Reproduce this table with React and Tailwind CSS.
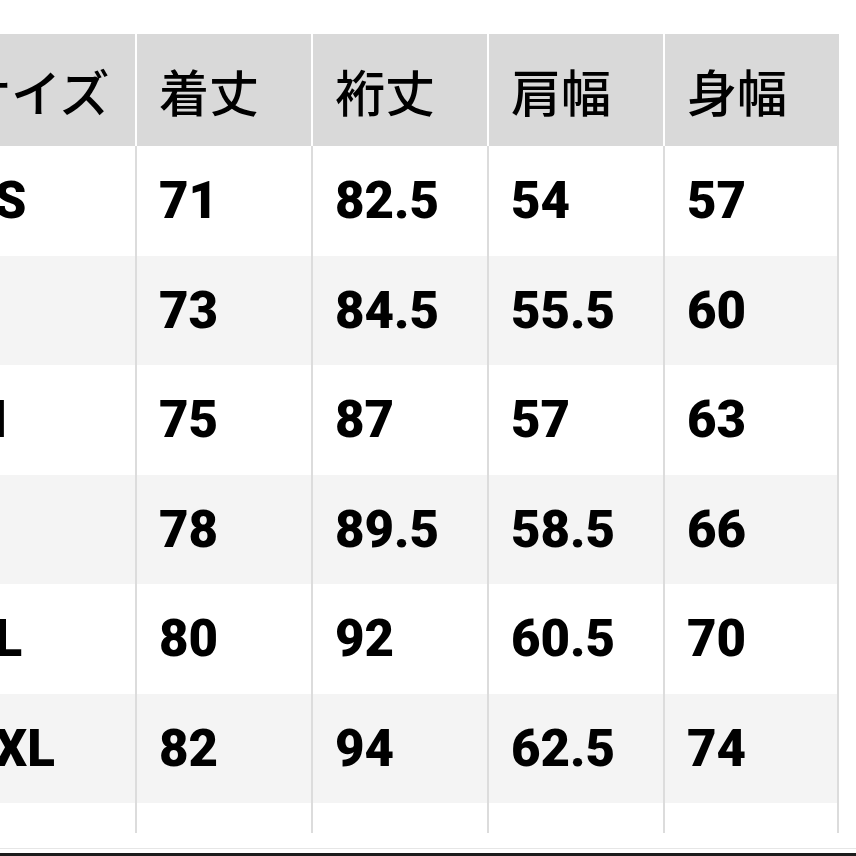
const headers = ['サイズ', '着丈', '裄丈', '肩幅', '身幅'];

const rows = [
	['XS', '71', '82.5', '54', '57'],
	['S', '73', '84.5', '55.5', '60'],
	['M', '75', '87', '57', '63'],
	['L', '78', '89.5', '58.5', '66'],
	['XL', '80', '92', '60.5', '70'],
	['XXL', '82', '94', '62.5', '74'],
];

const jp = { fontFamily: '"Noto Sans CJK JP", "Noto Sans", sans-serif' };
const num = { fontFamily: 'Roboto, "Liberation Sans", Arial, sans-serif' };

export default function App() {
	return (
		<div className="w-[856px] h-[856px] bg-white overflow-hidden relative">
			<div className="pt-[34px] ml-[-61px] w-[900px]">
				{/* header */}
				<div className="grid grid-cols-[196px_176px_176px_176px_176px] h-[112px]">
					{headers.map((h, i) => (
						<div
							key={h}
							style={jp}
							className={`flex items-center bg-[#d9d9d9] text-black text-[50px] font-medium leading-none pl-[22px] ${
								i > 0 ? 'border-l-2 border-white' : ''
							}`}
						>
							{h}
						</div>
					))}
				</div>

				{/* body */}
				{rows.map((r, ri) => (
					<div
						key={r[0]}
						className={`grid grid-cols-[196px_176px_176px_176px_176px] h-[109.5px] ${
							ri % 2 === 1 ? 'bg-[#f4f4f4]' : 'bg-white'
						}`}
					>
						{r.map((c, ci) => (
							<div
								key={ci}
								style={num}
								className={`flex items-center text-black font-black text-[51px] leading-none ${
									ci === 0 ? 'pl-[23px]' : 'pl-[22px] border-l-2 border-[#dcdcdc]'
								} ${ci === 4 ? 'border-r-2' : ''}`}
							>
								{c}
							</div>
						))}
					</div>
				))}

				{/* trailing empty row */}
				<div className="grid grid-cols-[196px_176px_176px_176px_176px] h-[30px]">
					{[0, 1, 2, 3, 4].map((ci) => (
						<div
							key={ci}
							className={`${ci > 0 ? 'border-l-2 border-[#dcdcdc]' : ''} ${ci === 4 ? 'border-r-2' : ''}`}
						/>
					))}
				</div>
			</div>

			<div className="absolute left-0 right-0 bottom-0">
				<div className="h-px bg-[#e6e6e6] mb-[4px]" />
				<div className="h-[3px] bg-[#1c1c1c]" />
			</div>
		</div>
	);
}
